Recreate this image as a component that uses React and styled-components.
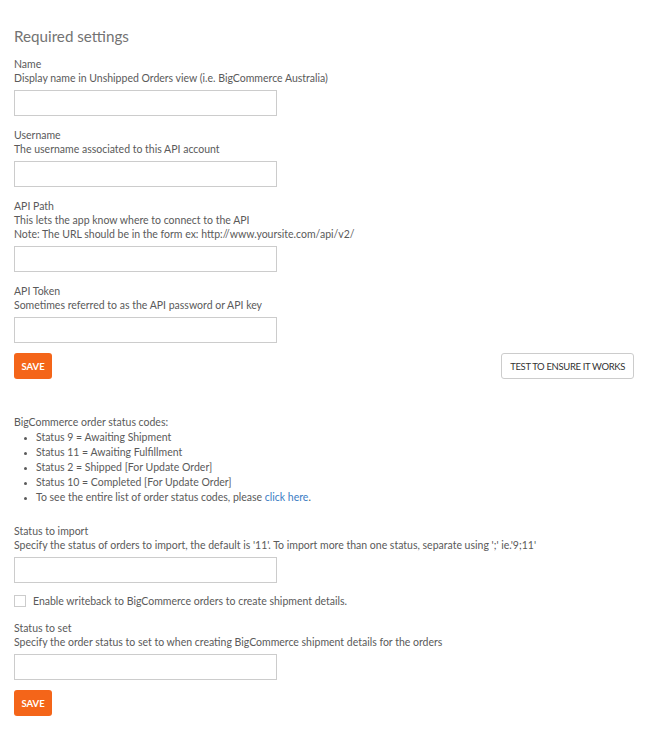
import React from 'react';
import styled, {createGlobalStyle} from "styled-components";

const GlobalStyle = createGlobalStyle`
  body {
    margin: 0;
    background: #ffffff;
    font-family: Lato, "Open Sans", sans-serif;
    color: #5a5a5a;
  }
`

const fields = [
    {label: 'Name', help: ['Display name in Unshipped Orders view (i.e. BigCommerce Australia)']},
    {label: 'Username', help: ['The username associated to this API account']},
    {
        label: 'API Path',
        help: ['This lets the app know where to connect to the API',
            'Note: The URL should be in the form ex: http://www.yoursite.com/api/v2/']
    },
    {label: 'API Token', help: ['Sometimes referred to as the API password or API key']},
];

const statusCodes = [
    'Status 9 = Awaiting Shipment',
    'Status 11 = Awaiting Fulfillment',
    'Status 2 = Shipped [For Update Order]',
    'Status 10 = Completed [For Update Order]',
];

const Field = ({label, help}) => (
    <StyledField>
        <Text>{label}</Text>
        {help.map(line => <Text key={line}>{line}</Text>)}
        <Input type="text"/>
    </StyledField>
);

const App = () => {
    return (
        <Page>
            <GlobalStyle/>
            <Heading>Required settings</Heading>
            {fields.map(f => <Field key={f.label} {...f}/>)}
            <ButtonRow>
                <SaveButton>Save</SaveButton>
                <OutlineButton>Test to ensure it works</OutlineButton>
            </ButtonRow>

            <Codes>
                <div>BigCommerce order status codes:</div>
                <CodeList>
                    {statusCodes.map(s => <li key={s}>{s}</li>)}
                    <li>To see the entire list of order status codes, please <a href="#">click here</a>.</li>
                </CodeList>
            </Codes>

            <Field label="Status to import"
                   help={["Specify the status of orders to import, the default is '11'. To import more than one status, separate using ';' ie.'9;11'"]}/>
            <CheckRow>
                <Check type="checkbox"/>
                <span>Enable writeback to BigCommerce orders to create shipment details.</span>
            </CheckRow>
            <Field label="Status to set"
                   help={['Specify the order status to set to when creating BigCommerce shipment details for the orders']}/>
            <ButtonRow>
                <SaveButton>Save</SaveButton>
            </ButtonRow>
        </Page>
    );
};

const Page = styled.div`
  padding: 26px 15px 20px 14px;
  font-size: 10.5px;
`

const Heading = styled.h2`
  margin: 0 0 11px;
  font-size: 15.2px;
  line-height: 20px;
  font-weight: 400;
  color: #737373;
`

const StyledField = styled.div`
  display: flex;
  flex-direction: column;
  align-items: flex-start;
  margin-bottom: 12px;
`

const Text = styled.div`
  font-size: 10.5px;
  line-height: 14px;
  color: #5a5a5a;
`

const Input = styled.input`
  box-sizing: border-box;
  width: 263px;
  height: 26px;
  margin: 5px 0 0;
  border: 1px solid #cccccc;
  border-radius: 0;
  background: #ffffff;
  outline: none;
`

const ButtonRow = styled.div`
  display: flex;
  justify-content: space-between;
  align-items: center;
  margin-top: -2px;
`

const SaveButton = styled.button`
  height: 26px;
  width: 38px;
  padding: 0;
  border: none;
  border-radius: 3px;
  background: #f46519;
  color: #ffffff;
  font-family: Lato, sans-serif;
  font-size: 9.5px;
  font-weight: 700;
  text-transform: uppercase;
`

const OutlineButton = styled.button`
  height: 26px;
  padding: 0 8px;
  border: 1px solid #cccccc;
  border-radius: 3px;
  background: #ffffff;
  color: #333333;
  font-family: Lato, sans-serif;
  font-size: 9.5px;
  text-transform: uppercase;
  letter-spacing: -0.35px;
`

const Codes = styled.div`
  margin: 36px 0 19px;
  line-height: 15px;
`

const CodeList = styled.ul`
  margin: 0;
  padding-left: 22px;
  list-style: disc;

  li::marker {
    font-size: 8px;
  }

  a {
    color: #3b7dc4;
    text-decoration: none;
  }
`

const CheckRow = styled.label`
  display: flex;
  align-items: center;
  gap: 7px;
  margin: -1px 0 13px;
  line-height: 14px;
`

const Check = styled.input`
  appearance: none;
  width: 12px;
  height: 12px;
  margin: 0;
  border: 1px solid #cccccc;
  background: #ffffff;
`

export default App;
